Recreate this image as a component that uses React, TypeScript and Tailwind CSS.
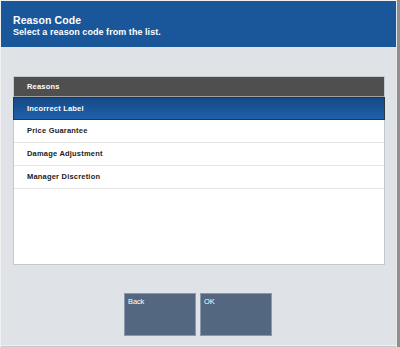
import React from 'react';

const reasons = ['Incorrect Label', 'Price Guarantee', 'Damage Adjustment', 'Manager Discretion'];

export default function App() {
  const selected = 0;

  return (
    <div
      className="flex w-[400px] h-[347px] bg-[#dfe2e6] overflow-hidden"
      style={{ fontFamily: '"Liberation Sans", Arial, sans-serif' }}
    >
      <div className="flex flex-col flex-1 border-l border-t border-[#f0f0f0] border-b-0">
        {/* header */}
        <div className="h-[46px] bg-[#19579a] pl-[12px] pt-[13px] text-white font-bold">
          <div className="text-[10.5px] leading-[13px] tracking-[0.1px]">Reason Code</div>
          <div className="text-[9px] leading-[11px] tracking-[0.05px]">Select a reason code from the list.</div>
        </div>

        {/* list */}
        <div className="flex-1 flex flex-col pl-[12px] pr-[11px] pt-[29px]">
          <div className="h-[189px] bg-white border border-[#c4c7cc] flex flex-col">
            <div className="h-[20px] bg-[#4f4f4f] border-b border-[#a0a0a0] pl-[13px] flex items-center text-white font-bold text-[7.5px] tracking-[0.2px]">
              Reasons
            </div>
            {reasons.map((r, i) => (
              <div
                key={r}
                className={
                  i === selected
                    ? 'h-[23px] flex items-center pl-[13px] text-white font-bold text-[7.5px] tracking-[0.2px] bg-gradient-to-b from-[#164a86] to-[#1f60aa] border border-[#2d3540] -mx-px'
                    : 'h-[23px] flex items-center pl-[13px] text-[#222] font-bold text-[7.5px] tracking-[0.2px] border-b border-[#e6e6e6]'
                }
              >
                {r}
              </div>
            ))}
          </div>

          {/* buttons */}
          <div className="flex justify-center gap-[4px] mt-[28px] pr-[2px]">
            <button className="w-[72px] h-[43px] bg-[#536880] border border-[#8a98a8] text-white text-[7.5px] text-left flex items-start pl-[3px] pt-[2px] tracking-[-0.1px]">
              Back
            </button>
            <button className="w-[72px] h-[43px] bg-[#536880] border border-[#8a98a8] text-white text-[7.5px] text-left flex items-start pl-[3px] pt-[2px] tracking-[-0.1px]">
              OK
            </button>
          </div>
          <div className="flex-1" />
        </div>
        <div className="h-[2px] bg-[#eef0f2] border-b border-[#c8cacd]" />
      </div>
      <div className="w-[4px] border-l border-[#e8e8e8] bg-[#8f8f8f]" />
    </div>
  );
}
